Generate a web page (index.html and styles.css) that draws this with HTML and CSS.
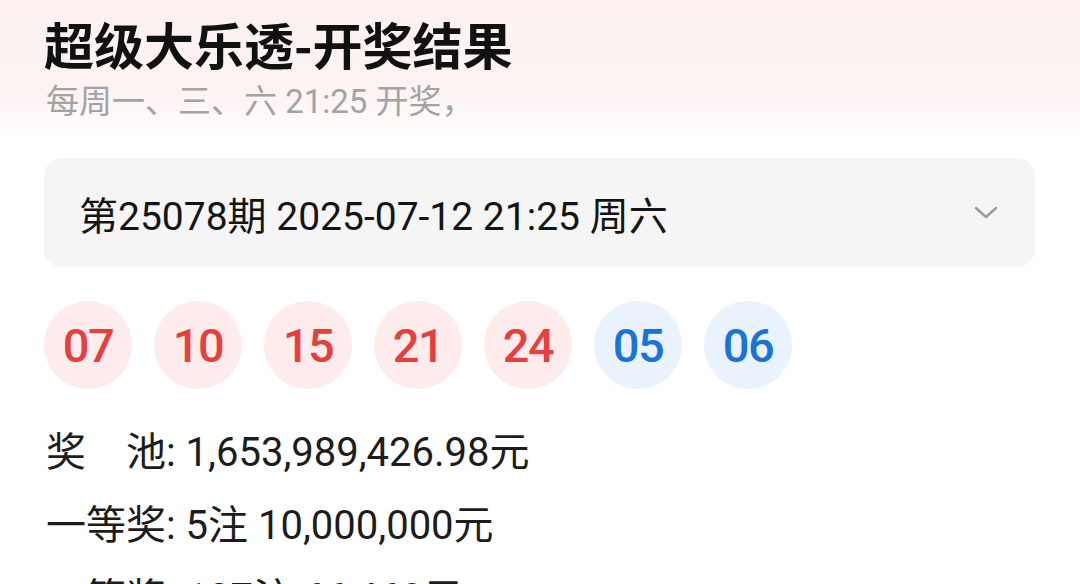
FILE: index.html
```html
<!DOCTYPE html>
<html lang="zh-CN">
<head>
<meta charset="utf-8">
<title>超级大乐透-开奖结果</title>
<link rel="stylesheet" href="styles.css">
</head>
<body>
<div class="page">
  <h1 class="title">超级大乐透-开奖结果</h1>
  <p class="subtitle">每周一、三、六 21:25 开奖，</p>
  <div class="select">
    <span class="select-text">第25078期 2025-07-12 21:25 周六</span>
    <svg class="chevron" width="24" height="14" viewBox="0 0 24 14"><path d="M2 2 L12 11 L22 2" fill="none" stroke="#9a9a9a" stroke-width="2.4" stroke-linecap="round" stroke-linejoin="round"/></svg>
  </div>
  <div class="balls">
    <span class="ball red">07</span>
    <span class="ball red">10</span>
    <span class="ball red">15</span>
    <span class="ball red">21</span>
    <span class="ball red">24</span>
    <span class="ball blue">05</span>
    <span class="ball blue">06</span>
  </div>
  <div class="prizes">
    <div class="prize">奖　池: 1,653,989,426.98元</div>
    <div class="prize">一等奖: 5注 10,000,000元</div>
    <div class="prize">二等奖: 127注 66,460元</div>
  </div>
</div>
</body>
</html>
```
FILE: styles.css
```css
html, body {
  margin: 0;
  padding: 0;
}
body {
  width: 1080px;
  height: 584px;
  overflow: hidden;
  font-family: "Roboto", "Noto Sans CJK SC", sans-serif;
  background: linear-gradient(180deg, #fdf1f1 0px, #fdf3f3 95px, #ffffff 140px, #ffffff 100%);
  color: #1a1a1a;
}
.page {
  padding: 14px 45px 0 44px;
}
.title {
  margin: 0;
  font-size: 50px;
  line-height: 58px;
  font-weight: 700;
  color: #111;
  font-family: "Noto Sans CJK SC", sans-serif;
}
.subtitle {
  margin: 10px 0 0 2px;
  font-size: 33px;
  line-height: 40px;
  color: #a3a3a3;
}
.select {
  margin-top: 36px;
  height: 109px;
  border-radius: 18px;
  background: #f5f5f6;
  display: flex;
  align-items: center;
  justify-content: space-between;
  padding: 0 37px 0 35px;
}
.select-text {
  font-size: 39px;
  color: #141414;
}
.chevron {
  display: block;
}
.balls {
  margin-top: 34px;
  display: flex;
  gap: 22px;
}
.ball {
  width: 88px;
  height: 88px;
  border-radius: 50%;
  display: flex;
  align-items: center;
  justify-content: center;
  font-size: 47px;
  font-weight: 500;
  letter-spacing: -1.5px;
}
.ball.red {
  background: #feeced;
  color: #e5403d;
}
.ball.blue {
  background: #e9f2fd;
  color: #1a73d6;
}
.prizes {
  margin-top: 27px;
}
.prize {
  font-size: 40px;
  line-height: 73px;
  color: #1c1c1c;
  margin-left: 2px;
}
```
